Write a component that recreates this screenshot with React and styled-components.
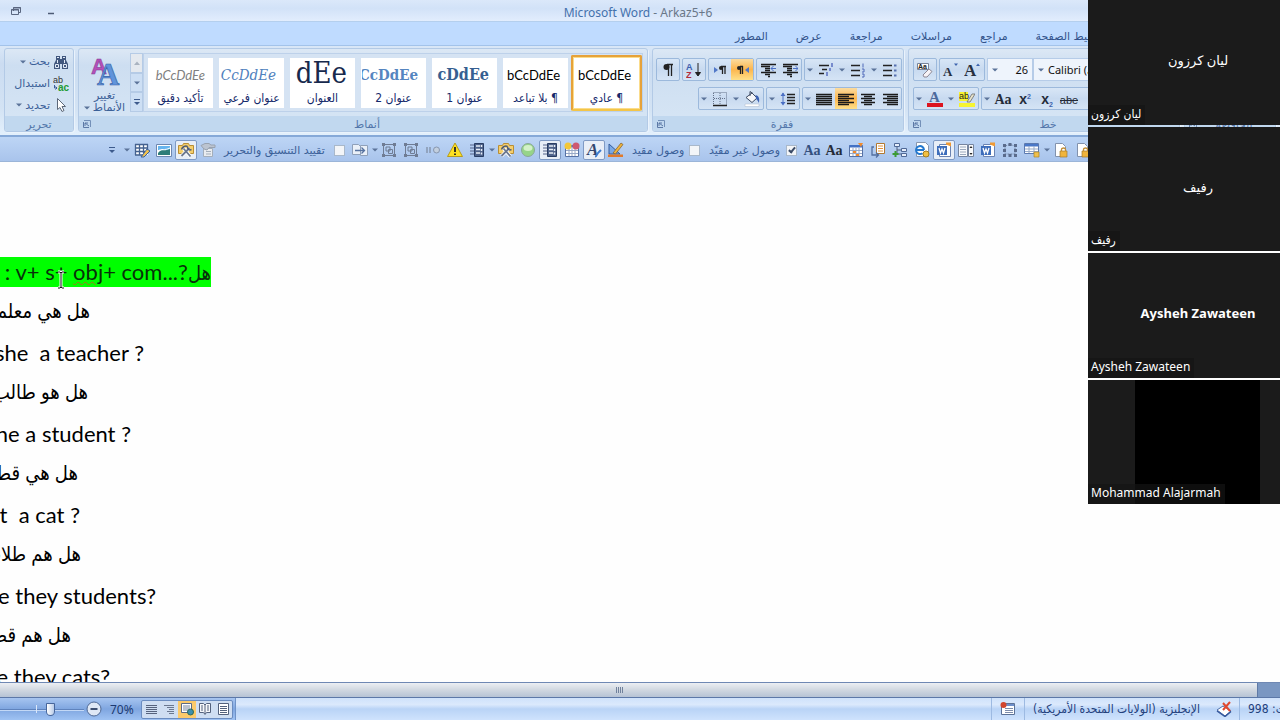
/* eslint-disable react/prop-types */
import React from "react"
import styled, { createGlobalStyle, css } from "styled-components"

const colors = {
  ink: "#3b6098",
  navy: "#15296b",
  edge: "#9cb9dc",
  tile: "#1b1b1b",
}

const uiFont = `"DejaVu Sans", sans-serif`
const narrowFont = `"DejaVu Sans Condensed", "DejaVu Sans", sans-serif`
const latinFont = `"Noto Sans", "Open Sans", "DejaVu Sans", sans-serif`
const bodyFont = `Lato, "DejaVu Sans Condensed", "DejaVu Sans", sans-serif`
const serifFont = `"DejaVu Serif Condensed", "DejaVu Serif", serif`

const GlobalStyle = createGlobalStyle`
  * { box-sizing: border-box; }
  body { margin: 0; font-family: ${uiFont}; font-size: 11px; color: ${colors.ink}; }
  button, input, select { font: inherit; color: inherit; margin: 0; }
  button { border: 0; background: none; padding: 0; }
  svg { direction: ltr; flex: none; }
`

const Window = styled.div`
  position: relative;
  display: flex;
  flex-direction: column;
  height: 100vh;
  overflow: hidden;
  background: #fff;
`

/* ---------- title bar and tabs ---------- */

const TitleBar = styled.header`
  display: grid;
  grid-template-columns: 1fr auto 1fr;
  align-items: center;
  flex: none;
  height: 22px;
  padding-right: 4px;
  border-bottom: 1px solid #b4cfee;
  background: linear-gradient(#dbe8fa, #d2e2f8 40%, #e2edfd);
`
const WindowButtons = styled.div`
  display: flex;
  gap: 20px;
  padding-left: 8px;
`
const WindowButton = styled.button`
  display: flex;
  width: 15px;
  height: 16px;
  align-items: center;
  justify-content: center;
`
const Title = styled.h1`
  margin: 0;
  padding-top: 4px;
  font: 400 12px/18px ${latinFont};
  color: #6a7788;
  span { color: #4471ac; }
`
const Tabs = styled.nav`
  display: flex;
  flex: none;
  gap: 28px;
  height: 24px;
  padding-left: 735px;
  overflow: hidden;
  background: #bfdbff;
  border-bottom: 1px solid #a3c3ea;
`
const Tab = styled.a`
  flex: none;
  color: #33548c;
  text-decoration: none;
  line-height: 29px;
  white-space: nowrap;
  direction: rtl;
`

/* ---------- ribbon ---------- */

const Ribbon = styled.section`
  display: flex;
  flex: none;
  gap: 4px;
  height: 91px;
  padding: 2px 4px 3px;
  background: linear-gradient(#d9e7f7, #cbdcf1 20%, #d3e3f4 70%, #e3f0fc);
  border-bottom: 2px solid #86a9d8;
`
const Group = styled.div`
  display: flex;
  flex-direction: column;
  flex: ${({ $grow }) => ($grow ? "1 0 0" : "none")};
  min-width: 0;
  border: 1px solid #b3cae6;
  border-radius: 3px;
  overflow: hidden;
  background: linear-gradient(#dce8f5, #cddef1 20%, #d7e6f5);
  box-shadow: 1px 1px 0 #eaf3fc;
`
const GroupBody = styled.div`
  display: flex;
  flex: 1;
  min-height: 0;
`
const GroupFooter = styled.div`
  display: flex;
  flex: none;
  align-items: center;
  height: 15px;
  padding: 0 4px;
  background: #c1d8ef;
  color: #5377ab;
`
const GroupName = styled.span`
  flex: 1;
  padding-top: 2px;
  text-align: center;
  line-height: 13px;
`
const EditColumn = styled.div`
  display: flex;
  flex-direction: column;
  width: 68px;
  padding: 2px 4px 0 0;
`
const EditButton = styled.button`
  display: flex;
  direction: rtl;
  align-items: center;
  gap: 3px;
  height: 22px;
  color: ${colors.ink};
  white-space: nowrap;
`
const ChangeStyles = styled.button`
  display: flex;
  flex-direction: column;
  align-items: center;
  justify-content: flex-end;
  width: 51px;
  padding-bottom: 2px;
  line-height: 12px;
  color: ${colors.ink};
  svg + span { padding-top: 2px; }
`
const StylesMenu = styled.span`
  display: flex;
  align-items: center;
  gap: 3px;
`
const GalleryScroll = styled.div`
  display: flex;
  flex-direction: column;
  width: 13px;
  margin: 4px 0;
  button {
    display: flex;
    flex: 1;
    align-items: center;
    justify-content: center;
    border: 1px solid #b5cbe6;
    background: #cddff4;
  }
  button:first-child { background: #e4e9ef; }
`
const Gallery = styled.div`
  display: flex;
  align-items: center;
  margin: 4px 4px 4px 0;
  padding-left: 1px;
  border: 1px solid #bdd1ea;
  background: #d5e3f3;
`
const StyleCard = styled.button`
  display: flex;
  flex-direction: column;
  width: 71px;
  height: 56px;
  padding: 1px 1px 0;
  border: 3px solid transparent;
  background: #fff padding-box;
  color: ${colors.navy};
  ${({ $selected }) => $selected && css`
    border: 2px solid #e6a23a;
    border-bottom-color: #f3c548;
    border-radius: 2px;
    box-shadow: inset 0 0 0 1px #fbdc8b;
    padding: 2px;
  `}
`
const Preview = styled.span`
  display: flex;
  align-items: center;
  justify-content: flex-end;
  width: 100%;
  height: 32px;
  padding-right: 7px;
  overflow: hidden;
  white-space: nowrap;
  color: #000;
  font-family: ${bodyFont};
  font-size: 13px;
  ${({ $kind }) => $kind === "heading" && css`
    font-family: ${serifFont};
    font-size: 16px;
    font-weight: 700;
    color: #365f91;
  `}
  ${({ $kind }) => $kind === "heading2" && css`
    font-family: ${serifFont};
    font-size: 15px;
    font-weight: 700;
    color: #5585c0;
  `}
  ${({ $kind }) => $kind === "title" && css`
    align-items: flex-start;
    font-family: ${serifFont};
    font-size: 29px;
    line-height: 28px;
    color: #17294d;
  `}
  ${({ $kind }) => $kind === "subtitle" && css`
    font-family: ${serifFont};
    font-size: 15px;
    font-style: italic;
    color: #4f81bd;
  `}
  ${({ $kind }) => $kind === "subtle" && css`
    font-style: italic;
    color: #808080;
  `}
`
const StyleName = styled.span`
  width: 100%;
  text-align: center;
  direction: rtl;
  font: 12px/15px ${narrowFont};
  white-space: nowrap;
`
const ToolRows = styled.div`
  display: flex;
  flex-direction: column;
  gap: 6px;
  width: ${({ $width }) => $width}px;
  padding: 9px 1px 0 4px;
`
const ToolRow = styled.div`
  display: flex;
  justify-content: ${({ $end }) => ($end ? "flex-end" : "flex-start")};
  gap: 2px;
  height: 23px;
`
const ToolSet = styled.div`
  display: flex;
  flex: ${({ $grow }) => ($grow ? 1 : "none")};
  border: 1px solid ${colors.edge};
  border-radius: 2px;
  background: linear-gradient(#d8e6f6, #c8daf0 50%, #d5e4f5);
`
const Tool = styled.button`
  display: flex;
  align-items: center;
  justify-content: center;
  width: ${({ $narrow }) => ($narrow ? 10 : 22)}px;
  color: #1c1c1c;
  background: ${({ $on }) => ($on ? "linear-gradient(#fbdca0, #fcb64e 50%, #fee08a)" : "none")};
`
const PickerBox = styled.label`
  display: flex;
  align-items: center;
  flex: ${({ $grow }) => ($grow ? "1" : "none")};
  width: ${({ $grow }) => ($grow ? "auto" : "46px")};
  margin-right: -2px;
  padding-left: 4px;
  border: 1px solid #b6cce8;
  background: #eef4fc;
  font: 11px ${latinFont};
`
const Picker = styled.select`
  flex: 1;
  min-width: 0;
  appearance: none;
  border: 0;
  padding: 0 4px;
  background: transparent;
  color: #111;
  text-align: ${({ $align }) => $align || "left"};
  text-align-last: ${({ $align }) => $align || "left"};
`

/* ---------- quick access bar ---------- */

const QuickBar = styled.section`
  display: flex;
  flex: none;
  align-items: center;
  height: 25px;
  padding: 2px 0 0 104px;
  overflow: hidden;
  background: linear-gradient(#bdd5f5, #a9c4ec);
  border-bottom: 1px solid #9bb5d8;
`
const QuickButton = styled.button`
  display: flex;
  flex: none;
  align-items: center;
  justify-content: center;
  width: 22px;
  height: 20px;
  border: 1px solid transparent;
  border-radius: 2px;
  color: #24365c;
  ${({ $slim }) => $slim && css`width: 7px;`}
  ${({ $on }) => $on && css`
    border-color: #7f9ac4;
    background: #e8eef7;
  `}
`
const MenuButton = styled(QuickButton)`
  width: 27px;
  justify-content: space-between;
  padding: 0 0 0 3px;
`
const CheckField = styled.label`
  display: flex;
  flex: none;
  align-items: center;
  justify-content: space-between;
  width: ${({ $width }) => $width}px;
  padding: 0 4px 0 5px;
  white-space: nowrap;
  span { direction: rtl; }
`
const CheckBox = styled.input`
  appearance: none;
  display: grid;
  width: 11px;
  height: 11px;
  border: 1px solid #a9b8ca;
  background: #f3f5f8;
  &:checked::before {
    content: "";
    width: 2px;
    height: 5px;
    margin: 0 auto;
    border: solid #3a4a66;
    border-width: 0 2px 2px 0;
    box-sizing: content-box;
    transform: rotate(40deg);
  }
`

/* ---------- document ---------- */

const Page = styled.main`
  position: relative;
  flex: 1;
  min-height: 0;
  padding-top: 89px;
  overflow: hidden;
  background: #fefefe;
`
const Line = styled.p`
  display: flex;
  justify-content: flex-end;
  align-items: center;
  width: ${({ $end }) => $end}px;
  height: 41px;
  margin: 0;
  overflow: hidden;
  color: #000;
  font-family: ${bodyFont};
  font-size: 22px;
  white-space: pre;
  direction: ltr;
  ${({ $arabic }) => $arabic && css`
    height: 40px;
    padding-bottom: 4px;
    font-size: 20px;
  `}
`
const Highlight = styled.mark`
  background: #00ff00;
  color: #08300a;
  line-height: 29px;
`
const ArabicWord = styled.span`
  font-size: 20px;
`
const Misspelled = styled.span`
  text-decoration: underline wavy #a8701c 1px;
  text-underline-offset: 1px;
`
const Caret = styled.svg`
  position: absolute;
  left: 56px;
  top: 107px;
`

/* ---------- scroll and status bars ---------- */

const ScrollTrack = styled.div`
  flex: none;
  height: 16px;
  padding-right: 22px;
  border-top: 1px solid #6f88b3;
  border-bottom: 1px solid #5c78a8;
  background: #7a97c2;
`
const ScrollThumb = styled.div`
  display: flex;
  align-items: center;
  justify-content: center;
  height: 14px;
  padding-right: 18px;
  border-right: 1px solid #5f7aa6;
  background: linear-gradient(#eceff3, #d0d7e0 50%, #b6c3d5);
`
const StatusBar = styled.footer`
  display: flex;
  flex: none;
  height: 22px;
  overflow: hidden;
  background: linear-gradient(#cfe2fb, #dbe9fc 30%, #b9d3f6 50%, #cfe3fd);
`
const ZoomArea = styled.div`
  display: flex;
  align-items: center;
  padding-right: 2px;
  background: linear-gradient(#a7c5f0, #7fa6e0 50%, #9fc2f3);
  border-right: 1px solid #6f93c8;
`
const ZoomSlider = styled.input`
  appearance: none;
  width: 84px;
  height: 20px;
  background:
    linear-gradient(#dbe8fa, #dbe8fa) 36px 6px / 1px 8px no-repeat,
    linear-gradient(#5f83bd, #5f83bd) 0 10px / 100% 1px no-repeat,
    linear-gradient(#c3d8f6, #c3d8f6) 0 11px / 100% 1px no-repeat;
  &::-webkit-slider-thumb {
    appearance: none;
    width: 9px;
    height: 13px;
    border: 1px solid #47669b;
    border-radius: 1px 1px 5px 5px;
    background: linear-gradient(90deg, #fff, #b8cbe8);
  }
`
const ZoomOut = styled.button`
  display: flex;
  width: 20px;
  justify-content: center;
`
const ZoomValue = styled.span`
  width: 37px;
  padding-left: 6px;
  font: 12px ${latinFont};
  color: #1c3a72;
`
const ViewSet = styled.div`
  display: flex;
  height: 19px;
  border: 1px solid #6a8cc0;
  border-radius: 2px;
  background: #cfdef2;
`
const ViewButton = styled.button`
  display: flex;
  align-items: center;
  justify-content: center;
  width: 18px;
  background: ${({ $on }) => ($on ? "#fbca6b" : "none")};
`
const StatusInfo = styled.div`
  display: flex;
  flex: 1;
  justify-content: flex-end;
  min-width: 0;
  font: 12px ${narrowFont};
`
const StatusItem = styled.div`
  display: flex;
  align-items: center;
  flex: none;
  justify-content: ${({ $start }) => ($start ? "flex-start" : "center")};
  width: ${({ $width }) => $width}px;
  padding: 0 8px;
  border-left: ${({ $rule }) => ($rule ? "1px solid #9dbae2" : "0")};
  color: #23407c;
  white-space: nowrap;
  span { direction: rtl; flex: none; }
`

/* ---------- meeting strip ---------- */

const Participants = styled.aside`
  position: absolute;
  top: 0;
  right: 0;
  display: grid;
  grid-auto-rows: 1fr;
  gap: 2px;
  width: 15%;
  height: 70vh;
`
const Tile = styled.article`
  display: grid;
  grid-template-columns: 1fr;
  background: ${({ $video }) =>
    $video ? `linear-gradient(90deg, ${colors.tile} 47px, #000 47px, #000 172px, ${colors.tile} 172px)` : colors.tile};
  color: #fff;
  > * { grid-area: 1 / 1; }
`
const TileName = styled.strong`
  place-self: center;
  padding: 0 0 4px 28px;
  font: ${({ $bold }) => ($bold ? 700 : 400)} 13px ${latinFont};
`
const TileTag = styled.span`
  place-self: end start;
  padding: 0 4px 2px 3px;
  background: rgba(20, 20, 20, 0.7);
  font: 12px/18px "Noto Sans", ${narrowFont};
`

/* ---------- icons ---------- */

const Svg = ({ w = 16, h = 16, children }) => (
  <svg width={w} height={h} viewBox={`0 0 ${w} ${h}`} fill="none" aria-hidden="true">
    {children}
  </svg>
)
const Arrow = ({ up, color = "#5b7399" }) => (
  <Svg w={6} h={4}>
    <path d={up ? "M0 4L3 0.5L6 4z" : "M0 0.5L3 3.5L6 0.5z"} fill={color} />
  </Svg>
)
const BarArrow = () => (
  <Svg w={8} h={8}>
    <path d="M1 1.5h6" stroke="#3d5a8c" />
    <path d="M1 4L4 7L7 4z" fill="#3d5a8c" />
  </Svg>
)
const Launcher = () => (
  <Svg w={8} h={8}>
    <path d="M1 0.5h6.5V7" stroke="#7390b8" />
    <path d="M0.5 2v5.5H6M2 6V3h3M2 3l4 3" stroke="#5c79a6" />
  </Svg>
)
const Lines = ({ rows, color = "#1a1a1a" }) => (
  <Svg>
    {rows.map(([from, to], i) => (
      // eslint-disable-next-line react/no-array-index-key
      <path key={i} d={`M${from} ${3.5 + i * 2}H${to}`} stroke={color} strokeWidth="1.3" />
    ))}
  </Svg>
)
const Binoculars = () => (
  <Svg>
    <path d="M3 2h4v3h2V2h4v4l2 4v5H9v-5H7v5H1v-5l2-4z" fill="#41577e" />
    <path d="M4 3.500h2M10 3.500h2M2.500 10.500h3v3h-3zM10.500 10.500h3v3h-3zM4.500 6v3M11.500 6v3" stroke="#e4ecf8" />
  </Svg>
)
const Replace = () => (
  <Svg>
    <text x="0" y="7" fontSize="9" fontFamily="Liberation Sans" fill="#333">ab</text>
    <text x="5" y="15" fontSize="10" fontWeight="700" fontFamily="Liberation Sans" fill="#249b32">ac</text>
    <path d="M1.500 9v3h2.500M2.500 10.500l1.500 1.500l-1.500 1.500" stroke="#3b5b98" />
  </Svg>
)
const Pointer = () => (
  <Svg>
    <path d="M4.500 1.500v11l2.500-2l2 4l2-1l-2-4h3.500z" fill="#fff" stroke="#5d6879" />
  </Svg>
)
const BigLetters = () => (
  <Svg w={32} h={32}>
    <text x="2" y="18" fontSize="22" fontWeight="700" fontFamily="Liberation Sans" fill="#b64fb8" stroke="#7d3c93" strokeWidth="0.5">A</text>
    <text x="8" y="29" fontSize="31" fontWeight="700" fontFamily="Liberation Serif" fill="#5f94dc" stroke="#3a64a8" strokeWidth="0.7">A</text>
  </Svg>
)
const Pilcrow = ({ tail }) => (
  <Svg>
    <path d={tail ? "M9 4.500h-3M8.500 4v8M6.500 4v8" : "M13 2.500H7M11.500 2v12M8.500 2v12"} stroke="#222" strokeWidth="1.3" />
    {tail ? <circle cx="5" cy="6" r="2" fill="#222" /> : <circle cx="6.500" cy="5" r="3" fill="#222" />}
    {tail && <path d="M15 5v6l-4-3z" fill="#5178c8" />}
  </Svg>
)
const PilcrowRight = () => (
  <Svg>
    <path d="M14 4.500H9M13 4v8M10.500 4v8" stroke="#222" strokeWidth="1.3" />
    <circle cx="9" cy="6" r="2" fill="#222" />
    <path d="M2 5v6l4-3z" fill="#5178c8" />
  </Svg>
)
const Sort = () => (
  <Svg>
    <text x="0" y="7.500" fontSize="9" fontWeight="700" fontFamily="Liberation Sans" fill="#3d5fb0">A</text>
    <text x="0" y="16" fontSize="9" fontWeight="700" fontFamily="Liberation Sans" fill="#b32b3b">Z</text>
    <path d="M12 1v12M9.500 10.500L12 14l2.500-3.500z" stroke="#222" fill="#222" />
  </Svg>
)
const Indent = ({ out }) => (
  <Svg>
    <path d="M1 2.500h15M1 4.500h9M5 6.500h5M5 8.500h5M1 10.500h15M5 12.500h5M8 14.500h2" stroke="#1c1c1c" strokeWidth="1.300" />
    <path d={out ? "M11 6.500h5M13.500 4l-2.500 2.500L13.500 9" : "M11 6.500h5M13.500 4l2.500 2.500L13.500 9"} stroke="#4a6fc4" />
  </Svg>
)
const MultiList = () => (
  <Svg>
    <path d="M1 3.500h10M4 7.500h5M1 11.500h5" stroke="#222" strokeWidth="1.300" />
    <path d="M14 1v4M12 6v3M9 10v4" stroke="#5a6fc0" strokeWidth="1.500" />
  </Svg>
)
const NumberList = () => (
  <Svg>
    <path d="M1 3.500h9M1 8.500h9M1 13.500h9" stroke="#222" strokeWidth="1.300" />
    <path d="M13 1.500v4M12 7h2v3h-2M12 12h2v3h-2" stroke="#4f68b8" />
  </Svg>
)
const BulletList = () => (
  <Svg>
    <path d="M1 3.500h9M1 8.500h9M1 13.500h9" stroke="#222" strokeWidth="1.300" />
    <path d="M12 2.500h2.500v2H12zM12 7.500h2.500v2H12zM12 12.500h2.500v2H12z" fill="#5670b0" />
  </Svg>
)
const Borders = () => (
  <Svg>
    <path d="M1.500 1.500h13v12M1.500 2v12M8 2v12M2 7.500h12" stroke="#65728a" strokeDasharray="1 1" />
    <path d="M1 14.500h14" stroke="#222" strokeWidth="1.500" />
  </Svg>
)
const Bucket = () => (
  <Svg>
    <path d="M2 6.500l6-4.500L13 7l-5 4.500z" fill="#f5f7fa" stroke="#3e4b63" />
    <path d="M6 5V0.500l3 2" stroke="#3e4b63" />
    <path d="M11.500 4c4 1 4 4 3.500 8c-1-2-1.500-3-3-4z" fill="#3d63b4" />
    <path d="M1 13h14v2.500H1z" fill="#fff" stroke="#a8b7ca" strokeWidth="0.500" />
  </Svg>
)
const Spacing = () => (
  <Svg>
    <path d="M7 3.500h8M7 6.500h8M7 9.500h8M7 12.500h8" stroke="#222" strokeWidth="1.300" />
    <path d="M3 2v11" stroke="#4a6fc4" />
    <path d="M0.500 5L3 1.500L5.500 5zM0.500 11L3 14.500L5.500 11z" fill="#4a6fc4" />
  </Svg>
)
const ClearFormat = () => (
  <Svg>
    <path d="M0.500 1.500h11v6H0.500z" fill="#fff" stroke="#78859a" />
    <text x="1" y="7" fontSize="7" fontWeight="700" fontFamily="Liberation Sans" fill="#222">Aa</text>
    <path d="M6 13l6-6l3 2.500l-5 5.500H7z" fill="#f7f3f6" stroke="#8c8794" />
  </Svg>
)
const SizeLetter = ({ up }) => (
  <Svg w={18}>
    <text x={up ? 0 : 1} y="14" fontSize={up ? 17 : 13} fontWeight="700" fontFamily="Liberation Serif" fill="#28303f">A</text>
    <path d={up ? "M12 4l2-2.500L16 4z" : "M12 1.500l2 2.500l2-2.500z"} fill="#3d63ae" />
  </Svg>
)
const FontColor = () => (
  <Svg>
    <text x="2" y="11" fontSize="15" fontWeight="700" fontFamily="Liberation Serif" fill="#4c6a9c">A</text>
    <path d="M0 12h16v4H0z" fill="#dc1420" />
  </Svg>
)
const Marker = () => (
  <Svg>
    <path d="M0 1h9v9H0zM0 12h16v4H0z" fill="#f6f432" />
    <text x="0" y="8" fontSize="9" fontFamily="Liberation Sans" fill="#222">ab</text>
    <path d="M8 11l5-8l3 0l-5 8z" fill="#e8e3cc" stroke="#6b6c6a" strokeWidth="0.800" />
  </Svg>
)
const CaseText = ({ children, strike, serif, color = "#252b38" }) => (
  <Svg w={20}>
    <text
      x="10"
      y="13"
      textAnchor="middle"
      fontSize={strike ? 11 : 14}
      fontWeight={strike ? 400 : 700}
      fontFamily={serif ? "Liberation Serif" : "Liberation Sans"}
      fill={color}
    >
      {children}
    </text>
    {strike && <path d="M1 9.500h18" stroke="#252b38" />}
  </Svg>
)
const GridPen = () => (
  <Svg>
    <path d="M1 2h13v11H1z" fill="#fff" />
    <path d="M1 2.500h13M1 6h13M1 9.500h10M1 13h8M1.500 2v11M5.500 2v11M9.500 2v9M13.500 2v6" stroke="#44618f" strokeWidth="1.300" />
    <path d="M7 15l6-8l3 2l-6 6z" fill="#f0c04c" stroke="#3860a0" />
  </Svg>
)
const Picture = () => (
  <Svg>
    <path d="M0.500 2.500h15v12h-15z" fill="#fff" stroke="#6d87b0" />
    <path d="M2 4h12v4H2z" fill="#65b4ee" />
    <path d="M2 11c4-5 5-1 12-4v6H2z" fill="#2e7d78" />
    <path d="M2 9c4-3 6 0 12-3" stroke="#fff" />
  </Svg>
)
const Tools = () => (
  <Svg>
    <path d="M0.500 3.500h4l1-2h5l1 2h4v8h-15z" fill="#f5cf6c" stroke="#b98e35" />
    <path d="M5.500 6.500l7 8M11.500 6l-8 8" stroke="#fff" strokeWidth="3.500" />
    <path d="M5.500 6.500l7 8M11.500 6l-8 8" stroke="#6c788f" strokeWidth="1.800" />
    <path d="M3.500 7.500c1-3 4-4 6-3M9.500 4.500c0 3 2 4 4 3" stroke="#4e5a72" strokeWidth="1.500" />
  </Svg>
)
const GreyHand = () => (
  <Svg>
    <path d="M3.500 6.500h9v8h-9z" fill="#e9ecf0" stroke="#a4aebb" />
    <path d="M1 3.500l4-2h4l2 1.500h4v2.500H9L7 8L4 7z" fill="#bcc4d0" stroke="#98a2b0" />
    <path d="M6 9.500h5M6 12h5" stroke="#a4aebb" />
  </Svg>
)
const Convert = () => (
  <Svg>
    <path d="M0.500 2.500h6l2 2v8h-8zM8.500 3.500h7v10h-7z" fill="#eaf0f8" stroke="#8fa0b9" />
    <path d="M3 8.500h9M9.500 5.500l3 3l-3 3" stroke="#5773a0" strokeWidth="1.300" />
  </Svg>
)
const GroupShapes = () => (
  <Svg>
    <path d="M2.500 2.500h11v11h-11zM5 5h4v4H5zM7.500 7.500h4v4h-4z" stroke="#6f7c94" />
    <path d="M1 1h3v3H1zM12 1h3v3h-3zM1 12h3v3H1zM12 12h3v3h-3z" fill="#6f7c94" />
  </Svg>
)
const Nodes = () => (
  <Svg>
    <path d="M3 4l5-1.500l5 1.500v8H3z" stroke="#7488a8" strokeDasharray="2 1" />
    <path d="M1 2h3v3H1zM6.500 1h3v3h-3zM12 2h3v3h-3zM1 7h3v3H1zM12 7h3v3h-3zM1 12h3v3H1zM6.500 12h3v3h-3zM12 12h3v3h-3z" fill="#5a6b8c" />
  </Svg>
)
const Dots = () => (
  <Svg>
    <path d="M2 5v6M5 5v6" stroke="#8796ae" strokeWidth="1.500" />
    <circle cx="11.500" cy="8" r="3" fill="#c2cfdf" stroke="#8796ae" />
  </Svg>
)
const Warning = () => (
  <Svg>
    <path d="M8 1L15.500 14.500H0.500z" fill="#fde023" stroke="#b59b1d" strokeLinejoin="round" />
    <path d="M8 5v5M8 11.500v1.500" stroke="#222" strokeWidth="1.800" />
  </Svg>
)
const Form = () => (
  <Svg>
    <path d="M1 3h5M1 6h5M1 9h5M1 12h5" stroke="#56658a" />
    <path d="M5.500 1.500h9v13h-9z" fill="#4e628a" stroke="#293c62" />
    <path d="M7 4h4M7 7.500h4M7 11h4M12.500 3v2M12.500 7v2M12.500 10.500v2" stroke="#e9eff8" strokeWidth="1.500" />
  </Svg>
)
const Ball = () => (
  <Svg>
    <circle cx="8" cy="8" r="6.500" fill="#96d489" stroke="#8aa798" />
    <ellipse cx="8" cy="6" rx="4.500" ry="3" fill="#d3f1c8" />
  </Svg>
)
const Calendar = ({ badge }) => (
  <Svg>
    <path d="M1.500 3.500h13v11h-13z" fill="#fff" stroke="#5671a5" />
    <path d="M1.500 3h13v2.500h-13z" fill="#4472c4" />
    <path d="M2 8.500h12M2 11.500h12M5 6v8M8 6v8M11 6v8" stroke="#98a9c7" />
    {badge ? (
      <>
        <circle cx="4" cy="4" r="3.500" fill="#f3c738" />
        <circle cx="12" cy="4" r="3.500" fill="#ce5870" />
      </>
    ) : (
      <path d="M5 9h3v2H5zM8 12h3v2H8zM10 1h5l-2 4z" fill="#f08a2c" />
    )}
  </Svg>
)
const StyleA = () => (
  <Svg>
    <text x="1" y="13" fontSize="17" fontStyle="italic" fontWeight="700" fontFamily="Liberation Serif" fill="#33466e">A</text>
    <path d="M9 14.500c2 0 2-3 3-3.500l3-3" stroke="#3e7cd0" strokeWidth="2" />
  </Svg>
)
const Ruler = () => (
  <Svg>
    <path d="M1 2v10h11z" fill="#7aa8e4" stroke="#345c9c" />
    <path d="M5 11l8-10l2 1.500L7.500 12z" fill="#efb43c" stroke="#7c5a2b" strokeWidth="0.700" />
    <path d="M0 12.500h15v2.500H0z" fill="#e07a2c" />
  </Svg>
)
const Sheets = () => (
  <Svg>
    <path d="M6.500 1.500h8v10h-8z" fill="#fff" stroke="#b27931" />
    <path d="M8 4h5M8 6.500h5M8 9h5" stroke="#e1923d" />
    <path d="M4 5H2v8h6M6 10.500l2.500 2.500L6 15.500" stroke="#536fa0" strokeWidth="1.300" />
  </Svg>
)
const Tree = () => (
  <Svg>
    <path d="M5 4v8h5M5 8h5" stroke="#4f5f7d" />
    <path d="M2.500 1.500h5v3h-5zM9.500 6.500h5v3h-5zM9.500 11.500h5v3h-5z" fill="#e6eefb" stroke="#4f6896" />
    <path d="M3.500 9v6M0.500 12h6" stroke="#3b9b35" strokeWidth="2" />
  </Svg>
)
const WebPage = () => (
  <Svg>
    <path d="M2.500 0.500h9l3 3v11h-12z" fill="#fff" stroke="#8896ad" />
    <path d="M10 8a4 4 0 1 0-1.500 3.200M3 8h7" stroke="#2478ce" strokeWidth="2" />
    <circle cx="12" cy="12" r="3" fill="#f2c043" stroke="#a57d1d" />
  </Svg>
)
const WordDoc = () => (
  <Svg>
    <path d="M3.500 2.500h11v12h-11z" fill="#fff" stroke="#6a83b2" />
    <path d="M1 4h10v9H1z" fill="#3d6dbb" />
    <path d="M3 6l1.500 5L6 7l1.500 4L9 6" stroke="#fff" strokeWidth="1.300" />
    <path d="M10 0.500h5v4l-5-2z" fill="#f09a34" />
  </Svg>
)
const ScrollDoc = () => (
  <Svg>
    <path d="M0.500 2.500h9v12h-9zM10.500 2.500h5v12h-5z" fill="#f7f9fc" stroke="#75849e" />
    <path d="M2 5h6M2 7.500h6M2 10h6M2 12.500h6" stroke="#9aa8bc" />
    <path d="M11.500 6L13 4l1.500 2zM11.500 11l1.500 2l1.500-2z" fill="#222" />
  </Svg>
)
const TableKey = () => (
  <Svg>
    <path d="M0.500 1.500h14v10h-14z" fill="#fff" stroke="#5b79af" />
    <path d="M1 2h13v2.500H1z" fill="#4a78c8" />
    <path d="M1 7h13M1 9.500h13M5 4v7M10 4v7" stroke="#98abc9" />
    <path d="M10 10h5v5h-5z" fill="#f0c04c" stroke="#ae8427" strokeWidth="0.700" />
  </Svg>
)
const LockDoc = () => (
  <Svg>
    <path d="M2.500 1.500h7l3 3v10h-10z" fill="#fff" stroke="#8292ad" />
    <path d="M7 9h7v6H7z" fill="#f0b43c" stroke="#a3782b" strokeWidth="0.700" />
    <path d="M8.500 9V7.500c0-2 4-2 4 0V9" stroke="#c08d35" strokeWidth="1.300" />
  </Svg>
)
const RestoreIcon = () => (
  <Svg w={10} h={8}>
    <path d="M2.500 4V0.500h7v5H8M0.500 2.500h7v5h-7z" stroke="#5a6780" />
    <path d="M2 1h8M0 3h8" stroke="#5a6780" />
  </Svg>
)
const MinusCircle = () => (
  <Svg>
    <circle cx="8" cy="8" r="7" fill="#dfe8f5" stroke="#506a96" />
    <path d="M4.500 8h7" stroke="#3d4f70" strokeWidth="2" />
  </Svg>
)
const WebView = () => (
  <Svg w={14}>
    <path d="M1.500 2.500h10v9h-10z" fill="#fff" stroke="#5c6b85" />
    <path d="M3 5h7M3 7h7M3 9h5" stroke="#7b879c" />
    <circle cx="10.500" cy="11" r="3" fill="#3d8fae" stroke="#2f6a55" />
  </Svg>
)
const BookView = () => (
  <Svg w={14}>
    <path d="M7 4v9M1.500 2.500h4L7 4l1.500-1.500h4v9h-4L7 13.500l-1.500-2h-4z" fill="#f5f7fa" stroke="#53617c" />
    <path d="M3 5h2M3 7h2M3 9h2M9 5h2M9 7h2M9 9h2" stroke="#53617c" />
  </Svg>
)
const PageView = () => (
  <Svg w={14}>
    <path d="M2.500 2.500h10v11h-10z" fill="#fff" stroke="#53617c" />
    <path d="M4 5.500h7M4 7.500h7M4 9.500h7M4 11.500h7" stroke="#53617c" />
  </Svg>
)
const OutlineView = () => (
  <Svg w={14}>
    <path d="M2 4.500h10M5 6.500h7M7 8.500h5M5 10.500h7M7 12.500h5" stroke="#6b7890" />
  </Svg>
)
const DraftView = () => (
  <Svg w={14}>
    <path d="M2 4.500h11M2 6.500h11M2 8.500h11M2 10.500h11M2 12.500h11" stroke="#56637d" />
  </Svg>
)
const MacroIcon = () => (
  <Svg>
    <path d="M1.500 2.500h13v11h-13z" fill="#fff" stroke="#5c7297" />
    <path d="M2 3h12v2H2z" fill="#6d8fcb" />
    <path d="M5 7.500h8M5 9.500h8M5 11.500h8" stroke="#7c8cab" />
    <circle cx="3.500" cy="4" r="3" fill="#d2462f" />
  </Svg>
)
const ProofIcon = () => (
  <Svg>
    <path d="M1 9l6-4l8 5l-6 5z" fill="#fff" stroke="#4e6ea8" />
    <path d="M1 10l8 5.500l6-5" stroke="#35589c" strokeWidth="1.500" />
    <path d="M7 2l7 8M14 1L7 9" stroke="#e0482f" strokeWidth="2" />
  </Svg>
)

/* ---------- data ---------- */

const tabs = ["المطور", "عرض", "مراجعة", "مراسلات", "مراجع", "تخطيط الصفحة"]

const cards = [
  { name: "تأكيد دقيق", sample: "bCcDdEe", kind: "subtle" },
  { name: "عنوان فرعي", sample: "CcDdEe", kind: "subtitle" },
  { name: "العنوان", sample: "dEe", kind: "title" },
  { name: "عنوان 2", sample: "CcDdEe", kind: "heading2" },
  { name: "عنوان 1", sample: "cDdEe", kind: "heading" },
  { name: "¶ بلا تباعد", sample: "bCcDdEe" },
  { name: "¶ عادي", sample: "bCcDdEe", selected: true },
]

const lines = [
  { text: "هل هي معلمة", end: 90, arabic: true },
  { text: "she  a teacher ?", end: 144 },
  { text: "هل هو طالب", end: 88, arabic: true },
  { text: "he a student ?", end: 131 },
  { text: "هل هي قطة", end: 78, arabic: true },
  { text: "t  a cat ?", end: 80 },
  { text: "هل هم طلاب", end: 81, arabic: true },
  { text: "e they students?", end: 156 },
  { text: "هل هم قطط", end: 71, arabic: true },
  { text: "e they cats?", end: 110 },
]

const people = [
  { name: "ليان كرزون" },
  { name: "رفيف" },
  { name: "Aysheh Zawateen", bold: true },
  { name: "Mohammad Alajarmah", video: true },
]

const full = [[0, 16], [0, 16], [0, 16], [0, 16], [0, 16], [0, 16]]
const left = [[0, 16], [0, 11], [0, 16], [0, 11], [0, 16], [0, 11]]
const center = [[1, 15], [4, 12], [1, 15], [4, 12], [1, 15], [4, 12]]
const right = [[1, 16], [5, 16], [1, 16], [5, 16], [1, 16], [5, 16]]

const DropTool = ({ icon, label }) => (
  <>
    <Tool $narrow aria-label={`${label} menu`}><Arrow /></Tool>
    <Tool aria-label={label}>{icon}</Tool>
  </>
)

const Footer = ({ name, launcher }) => (
  <GroupFooter>
    {launcher && <Launcher />}
    <GroupName>{name}</GroupName>
  </GroupFooter>
)

const QuickIcons = ({ items }) =>
  items.map(([key, icon, on]) => (
    <QuickButton key={key} $on={on} aria-label={key}>{icon}</QuickButton>
  ))

const QuickArrow = () => (
  <QuickButton $slim aria-label="more"><Arrow /></QuickButton>
)

function App() {
  return (
    <>
      <GlobalStyle />
      <Window>
        <TitleBar>
          <WindowButtons>
            <WindowButton aria-label="restore"><RestoreIcon /></WindowButton>
            <WindowButton aria-label="minimize">
              <Svg w={8} h={8}><path d="M1 6.500h6" stroke="#4d5b75" strokeWidth="1.500" /></Svg>
            </WindowButton>
          </WindowButtons>
          <Title><span>Microsoft Word</span> - Arkaz5+6</Title>
        </TitleBar>
        <Tabs>
          {tabs.map((tab) => <Tab key={tab} href="#">{tab}</Tab>)}
        </Tabs>

        <Ribbon>
          <Group>
            <GroupBody>
              <EditColumn>
                <EditButton><Binoculars />بحث<Arrow /></EditButton>
                <EditButton><Replace />استبدال</EditButton>
                <EditButton><Pointer />تحديد<Arrow /></EditButton>
              </EditColumn>
            </GroupBody>
            <Footer name="تحرير" />
          </Group>

          <Group>
            <GroupBody>
              <ChangeStyles>
                <BigLetters />
                <span>تغيير</span>
                <StylesMenu><Arrow />الأنماط</StylesMenu>
              </ChangeStyles>
              <GalleryScroll>
                <button aria-label="up"><Arrow up color="#a9b3c0" /></button>
                <button aria-label="down"><Arrow /></button>
                <button aria-label="more"><BarArrow /></button>
              </GalleryScroll>
              <Gallery>
                {cards.map(({ name, sample, kind, selected }) => (
                  <StyleCard key={name} $selected={selected}>
                    <Preview $kind={kind}>{sample}</Preview>
                    <StyleName>{name}</StyleName>
                  </StyleCard>
                ))}
              </Gallery>
            </GroupBody>
            <Footer name="أنماط" launcher />
          </Group>

          <Group>
            <GroupBody>
              <ToolRows $width={250}>
                <ToolRow $end>
                  <ToolSet><Tool aria-label="marks"><Pilcrow /></Tool></ToolSet>
                  <ToolSet><Tool aria-label="sort"><Sort /></Tool></ToolSet>
                  <ToolSet>
                    <Tool aria-label="ltr"><PilcrowRight /></Tool>
                    <Tool $on aria-label="rtl"><Pilcrow tail /></Tool>
                  </ToolSet>
                  <ToolSet>
                    <Tool aria-label="indent"><Indent out /></Tool>
                    <Tool aria-label="outdent"><Indent /></Tool>
                  </ToolSet>
                  <ToolSet>
                    <DropTool icon={<MultiList />} label="multilevel" />
                    <DropTool icon={<NumberList />} label="numbering" />
                    <DropTool icon={<BulletList />} label="bullets" />
                  </ToolSet>
                </ToolRow>
                <ToolRow $end>
                  <ToolSet>
                    <DropTool icon={<Borders />} label="borders" />
                    <DropTool icon={<Bucket />} label="shading" />
                  </ToolSet>
                  <ToolSet><DropTool icon={<Spacing />} label="spacing" /></ToolSet>
                  <ToolSet>
                    <DropTool icon={<Lines rows={full} />} label="justify" />
                    <Tool $on aria-label="left"><Lines rows={left} /></Tool>
                    <Tool aria-label="center"><Lines rows={center} /></Tool>
                    <Tool aria-label="right"><Lines rows={right} /></Tool>
                  </ToolSet>
                </ToolRow>
              </ToolRows>
            </GroupBody>
            <Footer name="فقرة" launcher />
          </Group>

          <Group>
            <GroupBody>
              <ToolRows $width={270}>
                <ToolRow>
                  <ToolSet><Tool aria-label="clear"><ClearFormat /></Tool></ToolSet>
                  <ToolSet>
                    <Tool aria-label="shrink"><SizeLetter /></Tool>
                    <Tool aria-label="grow"><SizeLetter up /></Tool>
                  </ToolSet>
                  <PickerBox>
                    <Arrow />
                    <Picker $align="right" aria-label="size"><option>26</option></Picker>
                  </PickerBox>
                  <PickerBox $grow>
                    <Arrow />
                    <Picker aria-label="font"><option>Calibri (نص أساسي)</option></Picker>
                  </PickerBox>
                </ToolRow>
                <ToolRow>
                  <ToolSet>
                    <DropTool icon={<FontColor />} label="color" />
                    <DropTool icon={<Marker />} label="highlight" />
                  </ToolSet>
                  <ToolSet $grow>
                    <DropTool icon={<CaseText serif>Aa</CaseText>} label="case" />
                    <Tool aria-label="superscript">
                      <CaseText>x<tspan fontSize="7" dy="-5" fill="#3d63ae">2</tspan></CaseText>
                    </Tool>
                    <Tool aria-label="subscript">
                      <CaseText>x<tspan fontSize="7" dy="3" fill="#3d63ae">2</tspan></CaseText>
                    </Tool>
                    <Tool aria-label="strike"><CaseText strike>abe</CaseText></Tool>
                  </ToolSet>
                </ToolRow>
              </ToolRows>
            </GroupBody>
            <Footer name="خط" launcher />
          </Group>

          <Group $grow>
            <GroupBody />
            <Footer name="الحافظة" launcher />
          </Group>
        </Ribbon>

        <QuickBar>
          <MenuButton aria-label="customize"><BarArrow /><Arrow /></MenuButton>
          <QuickIcons
            items={[
              ["draw table", <GridPen />],
              ["picture", <Picture />],
              ["design", <Tools />, true],
              ["properties", <GreyHand />],
            ]}
          />
          <CheckField $width={130}>
            <span>تقييد التنسيق والتحرير</span>
            <CheckBox type="checkbox" />
          </CheckField>
          <QuickIcons items={[["convert", <Convert />]]} />
          <QuickArrow />
          <QuickIcons
            items={[
              ["group", <GroupShapes />],
              ["ungroup", <GroupShapes />],
              ["dots", <Dots />],
              ["warning", <Warning />],
              ["form", <Form />],
            ]}
          />
          <QuickArrow />
          <QuickIcons
            items={[
              ["tools", <Tools />],
              ["ball", <Ball />],
              ["pane", <Form />, true],
              ["people", <Calendar badge />],
              ["style", <StyleA />, true],
              ["ruler", <Ruler />],
            ]}
          />
          <CheckField $width={77}>
            <span>وصول مقيد</span>
            <CheckBox type="checkbox" />
          </CheckField>
          <CheckField $width={97}>
            <span>وصول غير مقيّد</span>
            <CheckBox type="checkbox" defaultChecked />
          </CheckField>
          <QuickIcons
            items={[
              ["case one", <CaseText serif color="#34507f">Aa</CaseText>],
              ["case two", <CaseText serif>Aa</CaseText>],
              ["date", <Calendar />],
              ["sheets", <Sheets />],
              ["tree", <Tree />],
              ["web page", <WebPage />],
              ["document", <WordDoc />, true],
              ["scroll", <ScrollDoc />],
              ["new document", <WordDoc />],
              ["nodes", <Nodes />],
              ["table", <TableKey />],
            ]}
          />
          <QuickArrow />
          <QuickIcons items={[["lock", <LockDoc />], ["lock all", <LockDoc />]]} />
        </QuickBar>

        <Page>
          <Line $end={211}>
            <Highlight>
              . : v+ s+ <Misspelled>obj</Misspelled>+ com...?<ArabicWord>هل</ArabicWord>
            </Highlight>
          </Line>
          {lines.map(({ text, end, arabic }) => (
            <Line key={text} $end={end} $arabic={arabic}>
              <span dir={arabic ? "rtl" : "ltr"}>{text}</span>
            </Line>
          ))}
          <Caret width="10" height="22" viewBox="0 0 10 22" fill="none">
            <path d="M2 3h2l1 1l1-1h2M5 4v14M2 19h2l1-1l1 1h2" stroke="#fff" strokeWidth="3" />
            <path d="M2 3h2l1 1l1-1h2M5 4v14M2 19h2l1-1l1 1h2" stroke="#111" />
          </Caret>
        </Page>

        <ScrollTrack>
          <ScrollThumb>
            <Svg w={8} h={8}><path d="M0.500 1v6M2.500 1v6M4.500 1v6M6.500 1v6" stroke="#70819c" /></Svg>
          </ScrollThumb>
        </ScrollTrack>
        <StatusBar>
          <ZoomArea>
            <ZoomSlider type="range" min="0" max="100" defaultValue="61" aria-label="zoom" />
            <ZoomOut aria-label="zoom out"><MinusCircle /></ZoomOut>
            <ZoomValue>70%</ZoomValue>
            <ViewSet>
              <ViewButton aria-label="draft"><DraftView /></ViewButton>
              <ViewButton aria-label="outline"><OutlineView /></ViewButton>
              <ViewButton $on aria-label="web"><WebView /></ViewButton>
              <ViewButton aria-label="reading"><BookView /></ViewButton>
              <ViewButton aria-label="print"><PageView /></ViewButton>
            </ViewSet>
          </ZoomArea>
          <StatusInfo>
            <StatusItem $width={33} $rule><MacroIcon /></StatusItem>
            <StatusItem $width={184} $rule $start><span>الإنجليزية (الولايات المتحدة الأمريكية)</span></StatusItem>
            <StatusItem $width={31}><ProofIcon /></StatusItem>
            <StatusItem $width={41} $rule $start><span>الكلمات: 998</span></StatusItem>
          </StatusInfo>
        </StatusBar>

        <Participants>
          {people.map(({ name, bold, video }) => (
            <Tile key={name} $video={video}>
              {!video && <TileName $bold={bold}>{name}</TileName>}
              <TileTag>{name}</TileTag>
            </Tile>
          ))}
        </Participants>
      </Window>
    </>
  )
}

export default App
